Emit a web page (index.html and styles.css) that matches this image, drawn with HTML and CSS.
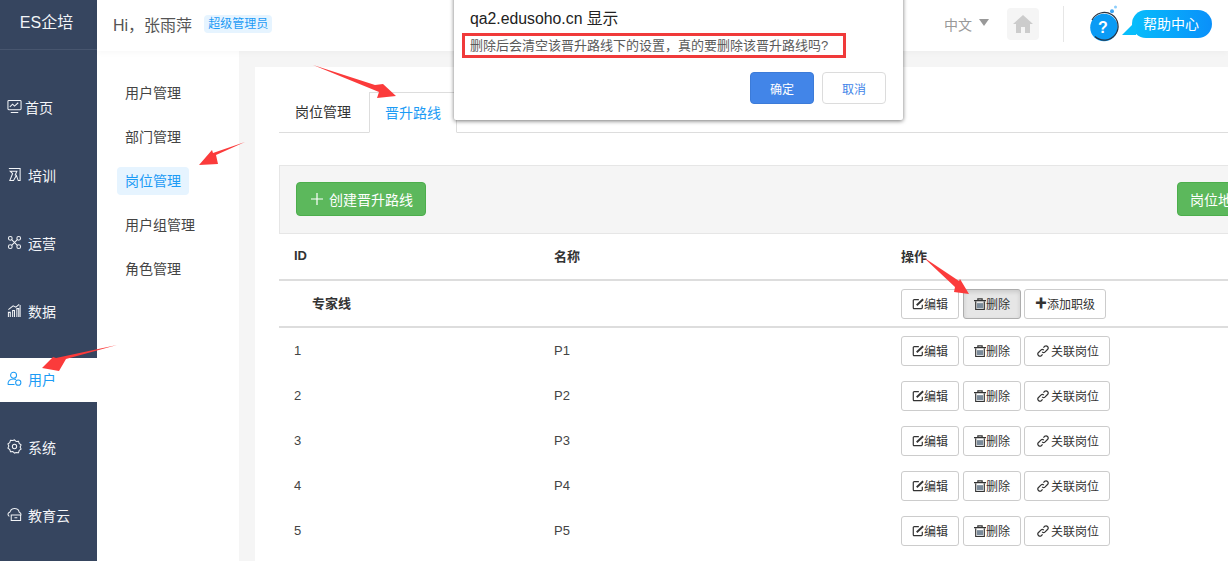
FILE: index.html
```html
<!DOCTYPE html>
<html lang="zh">
<head>
<meta charset="utf-8">
<title>岗位管理</title>
<link rel="stylesheet" href="styles.css">
</head>
<body>
<div class="app">
  <aside class="sidebar">
    <div class="logo">ES企培</div>
    <nav class="mainnav">
      <a class="mainitem"><svg class="mi" viewBox="0 0 16 16"><rect x="1" y="1.500" width="14" height="10" rx="1"/><path d="M3 8.500l3-3 2 2 4-3.500M4 14.500h8"/></svg><span>首页</span></a>
      <a class="mainitem"><svg class="mi" viewBox="0 0 16 16"><path d="M2 1.500h12v13h-2L10 9 7 14.500H3L6 7 3.500 4.500h7L8.500 9"/></svg><span class="wide">培训</span></a>
      <a class="mainitem"><svg class="mi" viewBox="0 0 16 16"><circle cx="3.500" cy="3.500" r="2"/><circle cx="12.500" cy="3.500" r="2"/><circle cx="3.500" cy="12.500" r="2"/><circle cx="12.500" cy="12.500" r="2"/><path d="M5 5l6 6M11 5l-6 6"/></svg><span class="wide">运营</span></a>
      <a class="mainitem"><svg class="mi" viewBox="0 0 16 16"><path d="M1.500 15V10h2v5M6 15V8h2v7M10.500 15V6h2v9M14 15V2M1.500 7l5-4 3 1.500L13 1.500"/></svg><span class="wide">数据</span></a>
      <a class="mainitem active"><svg class="mi" viewBox="0 0 16 16"><circle cx="7" cy="4.500" r="3.200"/><path d="M1 14.500c0-4 2.500-6 6-6 1 0 2 .2 2.600.6M1 14.500h7"/><circle cx="12" cy="12.500" r="2.800"/></svg><span class="wide">用户</span></a>
      <a class="mainitem"><svg class="mi" viewBox="0 0 16 16"><path d="M8 1l1.800 1.700 2.500-.3.700 2.400 2 1.500-1 2.200 1 2.200-2 1.500-.7 2.400-2.500-.3L8 15l-1.800-1.700-2.500.3-.7-2.400-2-1.500 1-2.200-1-2.200 2-1.500.7-2.400 2.500.3z"/><circle cx="8" cy="8" r="2.300"/></svg><span class="wide">系统</span></a>
      <a class="mainitem"><svg class="mi" viewBox="0 0 16 16"><path d="M2.500 10C.5 9 .5 6 3 5.500 4 2.500 6 1.500 8 1.500s4.500 1.300 5 4c2 .5 2.500 3 1 4.500M4.500 8.500h10v6h-10zM8 11.500h3"/></svg><span class="wide">教育云</span></a>
    </nav>
  </aside>
  <div class="workspace">
    <header class="topbar">
      <div class="greeting">
        <span class="hello">Hi，张雨萍</span>
        <span class="role">超级管理员</span>
      </div>
      <div class="tools">
        <span class="lang">中文<i class="caret"></i></span>
        <span class="homebox"><svg class="homeicon" viewBox="0 0 20 18"><path d="M10 0L0 9h3v9h5v-6h4v6h5V9h3z"/></svg></span>
        <span class="divider"></span>
        <span class="helpicon">
          <svg viewBox="0 0 34 34" class="helpsvg"><circle cx="17" cy="20.500" r="13.800" fill="#0a9bf5"/><path d="M5 13A13.800 13.800 0 1 1 8 29.500" fill="none" stroke="#2a3340" stroke-width="1.200"/><text x="16" y="25.500" class="helpq">?</text><circle cx="25" cy="4.300" r="2" fill="#3ba5f5"/><circle cx="28.500" cy="0" r="1.500" fill="#8ccdfb"/></svg>
        </span>
        <span class="helpbubble">帮助中心</span>
      </div>
    </header>
    <div class="body">
      <nav class="subnav">
        <a class="subitem">用户管理</a>
        <a class="subitem">部门管理</a>
        <a class="subitem current">岗位管理</a>
        <a class="subitem">用户组管理</a>
        <a class="subitem">角色管理</a>
      </nav>
      <main class="main">
        <section class="card">
          <div class="tabs">
            <a class="tab">岗位管理</a>
            <a class="tab on">晋升路线</a>
          </div>
          <div class="toolbar">
            <button class="btn-green"><svg class="plus" viewBox="0 0 12 12"><path d="M6 0v12M0 6h12"/></svg>创建晋升路线</button>
            <button class="btn-green short">岗位地图</button>
          </div>
          <div class="row head"><span>ID</span><span>名称</span><span>操作</span></div>
          <div class="row group">
            <span class="groupname">专家线</span><span></span>
            <span class="ops">
              <button class="op"><svg class="oi" viewBox="0 0 14 14"><path d="M12 8v3.500a1 1 0 0 1-1 1H2.500a1 1 0 0 1-1-1V3a1 1 0 0 1 1-1H8"/><path class="thick" d="M5.500 8.500L13 1.500"/></svg>编辑</button>
              <button class="op pressed"><svg class="oi bin" viewBox="0 0 14 14"><path d="M2 4v9.500h10V4M0 3h14M4.500 3V1h5v2"/><path class="fillbar" d="M3.500 6h7v6h-7z"/></svg>删除</button>
              <button class="op"><span class="bigplus">✚</span>添加职级</button>
            </span>
          </div>
          <div class="row"><span>1</span><span>P1</span><span class="ops"><button class="op"><svg class="oi" viewBox="0 0 14 14"><path d="M12 8v3.500a1 1 0 0 1-1 1H2.500a1 1 0 0 1-1-1V3a1 1 0 0 1 1-1H8"/><path class="thick" d="M5.500 8.500L13 1.500"/></svg>编辑</button><button class="op"><svg class="oi bin" viewBox="0 0 14 14"><path d="M2 4v9.500h10V4M0 3h14M4.500 3V1h5v2"/><path class="fillbar" d="M3.500 6h7v6h-7z"/></svg>删除</button><button class="op link"><svg class="oi" viewBox="0 0 14 14"><path d="M6 8a2.500 2.500 0 0 0 3.500 0l3-3A2.500 2.500 0 0 0 9 1.500L7.500 3M8 6a2.500 2.500 0 0 0-3.500 0l-3 3A2.500 2.500 0 0 0 5 12.500L6.500 11"/></svg>关联岗位</button></span></div>
          <div class="row"><span>2</span><span>P2</span><span class="ops"><button class="op"><svg class="oi" viewBox="0 0 14 14"><path d="M12 8v3.500a1 1 0 0 1-1 1H2.500a1 1 0 0 1-1-1V3a1 1 0 0 1 1-1H8"/><path class="thick" d="M5.500 8.500L13 1.500"/></svg>编辑</button><button class="op"><svg class="oi bin" viewBox="0 0 14 14"><path d="M2 4v9.500h10V4M0 3h14M4.500 3V1h5v2"/><path class="fillbar" d="M3.500 6h7v6h-7z"/></svg>删除</button><button class="op link"><svg class="oi" viewBox="0 0 14 14"><path d="M6 8a2.500 2.500 0 0 0 3.500 0l3-3A2.500 2.500 0 0 0 9 1.500L7.500 3M8 6a2.500 2.500 0 0 0-3.500 0l-3 3A2.500 2.500 0 0 0 5 12.500L6.500 11"/></svg>关联岗位</button></span></div>
          <div class="row"><span>3</span><span>P3</span><span class="ops"><button class="op"><svg class="oi" viewBox="0 0 14 14"><path d="M12 8v3.500a1 1 0 0 1-1 1H2.500a1 1 0 0 1-1-1V3a1 1 0 0 1 1-1H8"/><path class="thick" d="M5.500 8.500L13 1.500"/></svg>编辑</button><button class="op"><svg class="oi bin" viewBox="0 0 14 14"><path d="M2 4v9.500h10V4M0 3h14M4.500 3V1h5v2"/><path class="fillbar" d="M3.500 6h7v6h-7z"/></svg>删除</button><button class="op link"><svg class="oi" viewBox="0 0 14 14"><path d="M6 8a2.500 2.500 0 0 0 3.500 0l3-3A2.500 2.500 0 0 0 9 1.500L7.500 3M8 6a2.500 2.500 0 0 0-3.500 0l-3 3A2.500 2.500 0 0 0 5 12.500L6.500 11"/></svg>关联岗位</button></span></div>
          <div class="row"><span>4</span><span>P4</span><span class="ops"><button class="op"><svg class="oi" viewBox="0 0 14 14"><path d="M12 8v3.500a1 1 0 0 1-1 1H2.500a1 1 0 0 1-1-1V3a1 1 0 0 1 1-1H8"/><path class="thick" d="M5.500 8.500L13 1.500"/></svg>编辑</button><button class="op"><svg class="oi bin" viewBox="0 0 14 14"><path d="M2 4v9.500h10V4M0 3h14M4.500 3V1h5v2"/><path class="fillbar" d="M3.500 6h7v6h-7z"/></svg>删除</button><button class="op link"><svg class="oi" viewBox="0 0 14 14"><path d="M6 8a2.500 2.500 0 0 0 3.500 0l3-3A2.500 2.500 0 0 0 9 1.500L7.500 3M8 6a2.500 2.500 0 0 0-3.500 0l-3 3A2.500 2.500 0 0 0 5 12.500L6.500 11"/></svg>关联岗位</button></span></div>
          <div class="row"><span>5</span><span>P5</span><span class="ops"><button class="op"><svg class="oi" viewBox="0 0 14 14"><path d="M12 8v3.500a1 1 0 0 1-1 1H2.500a1 1 0 0 1-1-1V3a1 1 0 0 1 1-1H8"/><path class="thick" d="M5.500 8.500L13 1.500"/></svg>编辑</button><button class="op"><svg class="oi bin" viewBox="0 0 14 14"><path d="M2 4v9.500h10V4M0 3h14M4.500 3V1h5v2"/><path class="fillbar" d="M3.500 6h7v6h-7z"/></svg>删除</button><button class="op link"><svg class="oi" viewBox="0 0 14 14"><path d="M6 8a2.500 2.500 0 0 0 3.500 0l3-3A2.500 2.500 0 0 0 9 1.500L7.500 3M8 6a2.500 2.500 0 0 0-3.500 0l-3 3A2.500 2.500 0 0 0 5 12.500L6.500 11"/></svg>关联岗位</button></span></div>
        </section>
      </main>
    </div>
  </div>
</div>

<div class="dialog">
  <div class="dialog-title">qa2.edusoho.cn 显示</div>
  <div class="dialog-msg">删除后会清空该晋升路线下的设置，真的要删除该晋升路线吗?</div>
  <div class="dialog-actions">
    <button class="dlg ok">确定</button>
    <button class="dlg cancel">取消</button>
  </div>
</div>

<svg class="annotations" viewBox="0 0 1228 561">
  <polygon points="313,65 375,85 383,84 396,96 377,98 379,92"/>
  <polygon points="245,142 216,155 218,164 199,165 212,150 213,153"/>
  <polygon points="117,345 66,359 59,371 42,368 53,357 56,358"/>
  <polygon points="923,257 959,281 960,279 969,294 954,292 955,287"/>
</svg>
</body>
</html>
```
FILE: styles.css
```css
* { box-sizing: border-box; }
html, body { margin: 0; height: 100%; overflow: hidden; }
body {
  position: relative;
  font-family: "Liberation Sans", "Noto Sans CJK SC", sans-serif;
  font-size: 14px;
  color: #333;
  background: #fff;
}
button { font-family: inherit; cursor: pointer; }

.app { display: flex; height: 561px; width: 1228px; overflow: hidden; }

/* sidebar */
.sidebar { width: 97px; flex: none; background: #36455f; color: #fff; }
.logo {
  height: 50px;
  line-height: 45px;
  padding-right: 4px;
  text-align: center;
  font-size: 16px;
  color: #f2f4f7;
  border-bottom: 1px solid #47556e;
}
.mainnav { display: flex; flex-direction: column; gap: 24px; padding-top: 36px; }
.mainitem {
  height: 44px;
  display: flex;
  align-items: center;
  padding-left: 7px;
  padding-bottom: 3px;
  font-size: 14px;
  color: #f2f4f7;
}
.mi {
  width: 15px;
  height: 15px;
  margin-right: 3px;
  fill: none;
  stroke: currentColor;
  stroke-width: 1.100;
  flex: none;
}
.wide { margin-left: 3px; }
.mainitem.active { background: #fff; color: #1c9bf5; }

/* workspace */
.workspace { flex: 1; min-width: 0; display: flex; flex-direction: column; }
.topbar {
  height: 51px;
  flex: none;
  display: flex;
  align-items: center;
  justify-content: space-between;
  padding: 0 16px 4px 16px;
  background: #fff;
  box-shadow: 0 2px 6px rgba(0, 0, 0, .03);
  position: relative;
}
.greeting { display: flex; align-items: center; }
.hello { font-size: 16px; color: #555; margin-right: 12px; }
.role {
  height: 18px;
  line-height: 18px;
  padding: 0 4px;
  font-size: 12px;
  color: #1c9bf5;
  background: #e6f4ff;
  border-radius: 4px;
}
.tools { display: flex; align-items: center; }
.lang { font-size: 14px; color: #999; display: flex; align-items: center; }
.caret {
  width: 0;
  height: 0;
  margin-left: 7px;
  margin-top: -3px;
  border-style: solid;
  border-width: 7px 5px 0;
  border-color: #999 transparent transparent;
}
.homebox {
  width: 32px;
  height: 32px;
  margin-left: 18px;
  display: flex;
  align-items: center;
  justify-content: center;
  background: #f5f5f5;
  border-radius: 4px;
}
.homeicon { width: 20px; height: 18px; fill: #ccc; }
.divider { width: 1px; height: 36px; margin: 0 23px 0 24px; background: #e6e6e6; }
.helpicon { width: 34px; height: 34px; flex: none; }
.helpsvg { width: 34px; height: 34px; display: block; overflow: visible; }
.helpq { font-size: 16px; font-weight: 700; fill: #fff; text-anchor: middle; }
.helpbubble {
  position: relative;
  width: 80px;
  height: 28px;
  line-height: 28px;
  margin-left: 11px;
  padding-right: 2px;
  text-align: center;
  font-size: 14px;
  color: #fff;
  background: linear-gradient(90deg, #07bdfb, #0a90fa);
  border-radius: 14px;
}
.helpbubble::before {
  content: "";
  position: absolute;
  left: -10px;
  bottom: 3px;
  border-style: solid;
  border-width: 14px 0 0 14px;
  border-color: transparent transparent transparent #07bdfb;
  transform: scaleX(-1);
}

/* body */
.body { flex: 1; display: flex; min-height: 0; }
.subnav {
  width: 142px;
  flex: none;
  padding: 28px 20px 0;
  display: flex;
  flex-direction: column;
  gap: 16px;
  background: #fff;
}
.subitem {
  align-self: flex-start;
  height: 28px;
  line-height: 28px;
  padding: 0 8px;
  font-size: 14px;
  color: #444;
  border-radius: 4px;
}
.subitem.current { background: #e6f4ff; color: #1c9bf5; }
.main { flex: 1; min-width: 0; padding: 16px 0 0 16px; background: #f5f5f5; }
.card { width: 1100px; height: 100%; padding: 25px 0 0 24px; background: #fff; }

/* tabs */
.tabs { display: flex; height: 41px; border-bottom: 1px solid #ddd; }
.tab {
  height: 40px;
  line-height: 40px;
  padding: 0 16px;
  width: 90px;
  font-size: 14px;
  color: #333;
  white-space: nowrap;
}
.tab.on {
  width: 88px;
  height: 41px;
  padding: 0 15px;
  color: #1c9bf5;
  background: #fff;
  border: 1px solid #ddd;
  border-bottom-color: #fff;
}

/* toolbar */
.toolbar {
  height: 69px;
  margin-top: 32px;
  padding: 16px;
  padding-right: 0;
  display: flex;
  justify-content: space-between;
  width: 1000px;
  background: #f5f5f5;
  border: 1px solid #e6e6e6;
  border-width: 1px 0 1px 1px;
}
.btn-green {
  height: 34px;
  padding: 0 12px 0 14px;
  font-size: 14px;
  color: #fff;
  background: #5cb85c;
  border: 1px solid #4cae4c;
  border-radius: 4px;
  display: flex;
  align-items: center;
  white-space: nowrap;
}
.btn-green.short { width: 100px; margin-right: 2px; padding: 0 12px; }
.plus { width: 12px; height: 12px; margin-right: 6px; flex: none; fill: none; stroke: #fff; stroke-width: 1.200; }

/* table */
.row {
  height: 45px;
  width: 1000px;
  display: grid;
  grid-template-columns: 260px 347px 1fr;
  align-items: center;
  padding-left: 15px;
  font-size: 13px;
  color: #444;
}
.row.head {
  height: 47px;
  padding-bottom: 3px;
  font-weight: 700;
  color: #333;
  border-bottom: 2px solid #ddd;
}
.row.group {
  height: 47px;
  border-bottom: 2px solid #ddd;
}
.groupname { padding-left: 18px; margin-top: -2px; font-weight: 700; color: #333; white-space: nowrap; }
.ops { display: flex; align-items: center; gap: 4px; }
.op {
  height: 30px;
  padding: 0 10px;
  display: flex;
  align-items: center;
  justify-content: center;
  font-size: 12px;
  color: #333;
  background: #fff;
  border: 1px solid #ccc;
  border-radius: 3px;
  white-space: nowrap;
}
.op:last-child { margin-left: -1px; }
.op.pressed { background: #e6e6e6; border-color: #adadad; box-shadow: inset 0 2px 4px rgba(0, 0, 0, .125); }
.op.link { padding: 0 10px 0 12px; }
.oi {
  width: 12px;
  height: 12px;
  fill: none;
  stroke: #333;
  stroke-width: 1.400;
  flex: none;
}
.oi .thick { stroke-width: 2.200; }
.link .oi { margin-right: 2px; }
.fillbar { fill: #7a8a99; stroke: none; }
.bigplus { font-size: 12px; line-height: 1; }

/* dialog */
.dialog {
  position: absolute;
  left: 454px;
  top: -10px;
  width: 449px;
  height: 130px;
  padding: 20px 16px 0;
  background: #fff;
  border-radius: 2px;
  box-shadow: 0 1px 4px rgba(0, 0, 0, .55);
}
.dialog-title { font-size: 15.800px; line-height: 18px; color: #222; }
.dialog-msg {
  width: 384px;
  height: 25px;
  margin: 5px 0 0 -8px;
  padding-left: 5px;
  line-height: 19px;
  font-size: 13px;
  color: #5a5a5a;
  border: 3px solid #f03a3a;
  white-space: nowrap;
}
.dialog-actions { display: flex; justify-content: flex-end; gap: 8px; margin: 14px 1px 0 0; }
.dlg { width: 64px; height: 32px; font-size: 12px; border-radius: 4px; }
.ok { background: #4285e8; color: #fff; border: 1px solid #3c7bd8; }
.cancel { background: #fff; color: #4285e8; border: 1px solid #dcdcdc; }

/* hand drawn annotations */
.annotations {
  position: absolute;
  left: 0;
  top: 0;
  width: 1228px;
  height: 561px;
  pointer-events: none;
  fill: #fb3b3b;
}
```
